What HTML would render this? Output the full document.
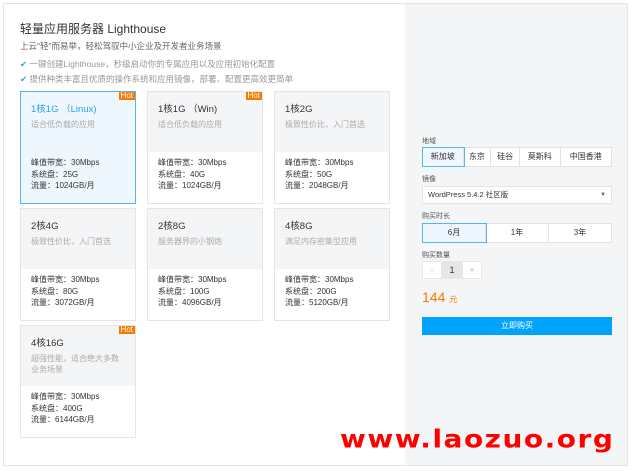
<!DOCTYPE html><html><head><meta charset="utf-8"><style>
*{margin:0;padding:0;box-sizing:border-box}
body{width:632px;height:471px;background:#fff;font-family:"Liberation Sans","Noto Sans CJK SC",sans-serif;position:relative;overflow:hidden;color:#333}
.frame{position:absolute;left:3px;top:3px;width:625px;height:463px;border:1px solid #e5e5e5}
.abs{position:absolute}
.t{font-size:11px;white-space:nowrap}
.card{position:absolute;width:116px;height:113px;border:1px solid #e5e5e5;background:#fff}
.card .top{height:60px;background:#f4f5f7;padding:9px 10px}
.card.sel{border-color:#55b7ee;background:#eef7fe}
.card.sel .top{background:#eef7fe}
.card .n{font-size:9.5px;color:#333}
.card.sel .n{color:#2a9ee8}
.card .d{font-size:8px;color:#aaa;margin-top:4px;line-height:11px}
.card .b{padding:5px 10px;font-size:8px;color:#333;line-height:11.5px}
.hot{position:absolute;right:0;top:0;background:#f57c00;color:#fff;font-size:8px;padding:0 2px;line-height:8px}
.panel{position:absolute;left:405px;top:4px;width:222px;height:461px;background:#f3f5f7}
.lab{font-size:7px;color:#555}
.seg{position:absolute;display:flex;background:#fff;border:1px solid #e3e3e3}
.seg div{font-size:8px;text-align:center;line-height:18px;border-right:1px solid #e3e3e3}
.seg .on{background:#eef7fe;outline:1px solid #55b7ee}
</style></head><body>
<div class="frame"></div>
<div class="panel"></div>
<div class="abs" style="left:20px;top:20px;font-size:12px;color:#333">轻量应用服务器 Lighthouse</div>
<div class="abs t" style="left:20px;top:40px;font-size:8.5px;color:#666">上云"轻"而易举，轻松驾驭中小企业及开发者业务场景</div>
<div class="abs t" style="left:20px;top:58px;font-size:8.5px;color:#999"><span style="color:#2a9ee8">✔</span> 一键创建Lighthouse，秒级启动你的专属应用以及应用初始化配置</div>
<div class="abs t" style="left:20px;top:73px;font-size:8.5px;color:#999"><span style="color:#2a9ee8">✔</span> 提供种类丰富且优质的操作系统和应用镜像，部署、配置更高效更简单</div>

<div class="card sel" style="left:20px;top:91px"><div class="hot">Hot</div><div class="top"><div class="n">1核1G （Linux)</div><div class="d">适合低负载的应用</div></div><div class="b">峰值带宽：30Mbps<br>系统盘：25G<br>流量：1024GB/月</div></div>
<div class="card" style="left:147px;top:91px"><div class="hot">Hot</div><div class="top"><div class="n">1核1G （Win)</div><div class="d">适合低负载的应用</div></div><div class="b">峰值带宽：30Mbps<br>系统盘：40G<br>流量：1024GB/月</div></div>
<div class="card" style="left:274px;top:91px"><div class="top"><div class="n">1核2G</div><div class="d">极致性价比，入门首选</div></div><div class="b">峰值带宽：30Mbps<br>系统盘：50G<br>流量：2048GB/月</div></div>
<div class="card" style="left:20px;top:208px"><div class="top"><div class="n">2核4G</div><div class="d">极致性价比，入门首选</div></div><div class="b">峰值带宽：30Mbps<br>系统盘：80G<br>流量：3072GB/月</div></div>
<div class="card" style="left:147px;top:208px"><div class="top"><div class="n">2核8G</div><div class="d">服务器界的小钢炮</div></div><div class="b">峰值带宽：30Mbps<br>系统盘：100G<br>流量：4096GB/月</div></div>
<div class="card" style="left:274px;top:208px"><div class="top"><div class="n">4核8G</div><div class="d">满足内存密集型应用</div></div><div class="b">峰值带宽：30Mbps<br>系统盘：200G<br>流量：5120GB/月</div></div>
<div class="card" style="left:20px;top:325px"><div class="hot">Hot</div><div class="top"><div class="n">4核16G</div><div class="d">超强性能，适合绝大多数业务场景</div></div><div class="b">峰值带宽：30Mbps<br>系统盘：400G<br>流量：6144GB/月</div></div>

<div class="abs lab" style="left:422px;top:136px">地域</div>
<div class="seg" style="left:422px;top:147px;width:190px;height:20px"><div class="on" style="width:41px">新加坡</div><div style="width:28px">东京</div><div style="width:29px">硅谷</div><div style="width:41px">莫斯科</div><div style="width:51px;border:0">中国香港</div></div>
<div class="abs lab" style="left:422px;top:174px">镜像</div>
<div class="abs" style="left:422px;top:186px;width:190px;height:18px;background:#fff;border:1px solid #e3e3e3;font-size:7.5px;line-height:16px;padding-left:5px">WordPress 5.4.2 社区版<span style="position:absolute;right:5px;font-size:6px;color:#666">▼</span></div>
<div class="abs lab" style="left:422px;top:211px">购买时长</div>
<div class="seg" style="left:422px;top:223px;width:190px;height:20px"><div class="on" style="width:63px">6月</div><div style="width:63px">1年</div><div style="width:62px;border:0">3年</div></div>
<div class="abs lab" style="left:422px;top:250px">购买数量</div>
<div class="abs" style="left:422px;top:261px;width:60px;height:18px;background:#fff;border:1px solid #e8e8e8;display:flex;font-size:9px;line-height:16px;text-align:center;color:#bbb"><div style="width:18px">-</div><div style="width:22px;background:#e6e6e6;color:#333">1</div><div style="width:18px">+</div></div>
<div class="abs" style="left:422px;top:289px;font-size:14px;color:#f57c00">144 <span style="font-size:8px">元</span></div>
<div class="abs" style="left:422px;top:317px;width:190px;height:18px;background:#00a4ff;color:#fff;font-size:8px;text-align:center;line-height:18px">立即购买</div>
<div class="abs" style="left:340px;top:424px;font-size:28px;font-weight:bold;color:#ff0000;letter-spacing:1.5px;white-space:nowrap;font-family:'DejaVu Sans',sans-serif;transform:scaleY(0.9);transform-origin:top left">www.laozuo.org</div>
</body></html>
